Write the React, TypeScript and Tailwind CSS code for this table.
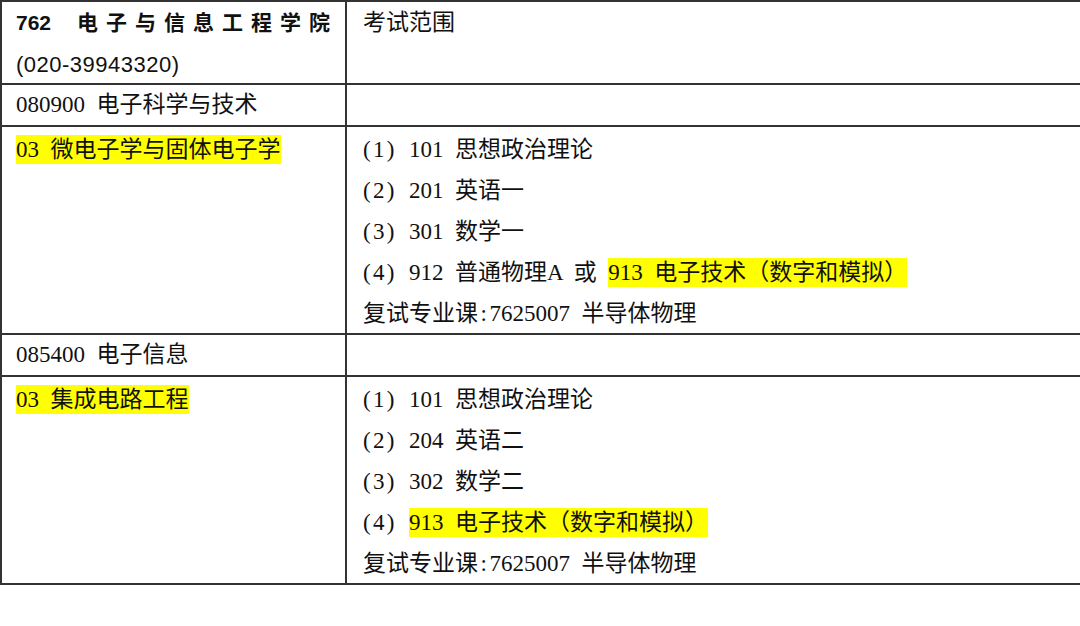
const serif = "font-['Liberation_Serif','Noto_Sans_CJK_SC',serif]";
const sans = "font-['Liberation_Sans','Noto_Sans_CJK_SC',sans-serif]";

function Num({ n }: { n: number }) {
  return (
    <span className="inline-flex w-[34.5px] justify-between pr-[3px]">
      <span>(</span>
      <span>{n}</span>
      <span>)</span>
    </span>
  );
}

function Colon() {
  return <span className="inline-block w-[11.5px] text-center">:</span>;
}

function Mark({ children }: { children: React.ReactNode }) {
  return <span className="bg-[#ffff00] py-[2px]">{children}</span>;
}

export default function App() {
  return (
    <div className="w-[1080px] h-[626px] bg-white overflow-hidden text-[#111]">
      <div className="w-[1100px] border-t-2 border-l-2 border-[#333]">
        {/* header */}
        <div className="flex h-[83px] border-b-2 border-[#333]">
          <div className={`w-[345px] shrink-0 border-r-2 border-[#333] pl-[14px] ${sans} text-[21px] leading-[42px]`}>
            <div className="flex items-center">
              <span className="font-bold">762</span>
              <span className="ml-[26px] font-bold tracking-[8px]">电子与信息工程学院</span>
            </div>
            <div className="text-[22px] tracking-[0.5px]">(020-39943320)</div>
          </div>
          <div className={`flex-1 pl-[16px] ${serif} text-[23px] leading-[42px]`}>考试范围</div>
        </div>

        {/* 080900 */}
        <div className={`flex h-[42px] border-b-2 border-[#333] ${serif} text-[23px] leading-[40px] [word-spacing:5.75px]`}>
          <div className="w-[345px] shrink-0 border-r-2 border-[#333] pl-[14px]">080900 电子科学与技术</div>
          <div className="flex-1" />
        </div>

        {/* 03 微电子学与固体电子学 */}
        <div className={`flex h-[208px] border-b-2 border-[#333] ${serif} text-[23px] leading-[41px] [word-spacing:5.75px]`}>
          <div className="w-[345px] shrink-0 border-r-2 border-[#333] pl-[14px] pt-[2px]">
            <Mark>03 微电子学与固体电子学</Mark>
          </div>
          <div className="flex-1 pl-[16px] pt-[2px]">
            <div><Num n={1} /> 101 思想政治理论</div>
            <div><Num n={2} /> 201 英语一</div>
            <div><Num n={3} /> 301 数学一</div>
            <div>
              <Num n={4} /> 912 普通物理A 或 <Mark>913 电子技术（数字和模拟）</Mark>
            </div>
            <div>
              复试专业课<Colon />7625007 半导体物理
            </div>
          </div>
        </div>

        {/* 085400 */}
        <div className={`flex h-[42px] border-b-2 border-[#333] ${serif} text-[23px] leading-[40px] [word-spacing:5.75px]`}>
          <div className="w-[345px] shrink-0 border-r-2 border-[#333] pl-[14px]">085400 电子信息</div>
          <div className="flex-1" />
        </div>

        {/* 03 集成电路工程 */}
        <div className={`flex h-[208px] border-b-2 border-[#333] ${serif} text-[23px] leading-[41px] [word-spacing:5.75px]`}>
          <div className="w-[345px] shrink-0 border-r-2 border-[#333] pl-[14px] pt-[2px]">
            <Mark>03 集成电路工程</Mark>
          </div>
          <div className="flex-1 pl-[16px] pt-[2px]">
            <div><Num n={1} /> 101 思想政治理论</div>
            <div><Num n={2} /> 204 英语二</div>
            <div><Num n={3} /> 302 数学二</div>
            <div>
              <Num n={4} /> <Mark>913 电子技术（数字和模拟）</Mark>
            </div>
            <div>
              复试专业课<Colon />7625007 半导体物理
            </div>
          </div>
        </div>
      </div>
    </div>
  );
}
